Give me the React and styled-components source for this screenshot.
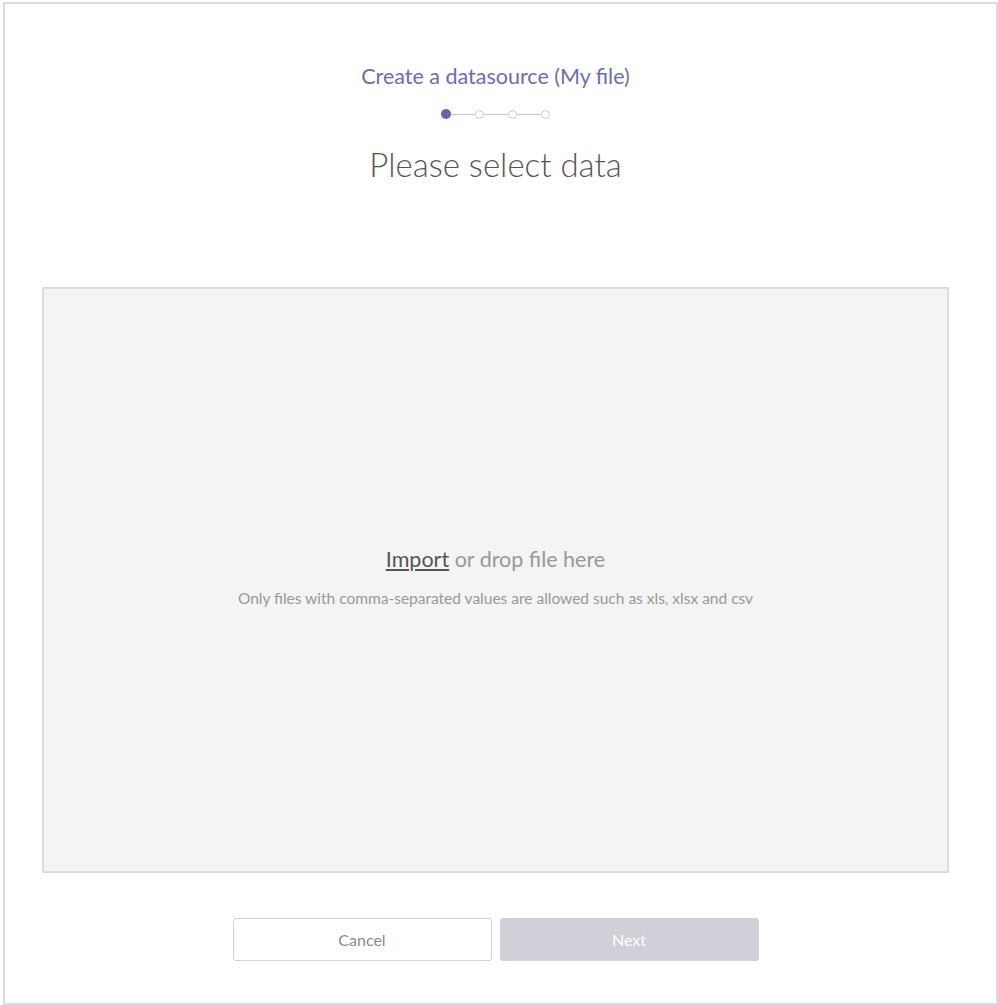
import React from 'react';
import styled, { createGlobalStyle } from 'styled-components';

const GlobalStyle = createGlobalStyle`
  body {
    margin: 0;
    font-family: Lato, "Open Sans", sans-serif;
    background: #fff;
  }
`;

const Frame = styled.div`
  box-sizing: border-box;
  width: 995px;
  height: 1003px;
  margin: 2px 0 0 3px;
  border: 2px solid #dcdcdc;
  display: flex;
  flex-direction: column;
  align-items: center;
  padding: 58px 47px 0 37px;
`;

const Title = styled.h2`
  margin: 0;
  font-size: 21.5px;
  font-weight: 400;
  line-height: 28px;
  color: #6a6eb3;
`;

const Steps = styled.div`
  display: flex;
  align-items: center;
  margin-top: 17px;
  height: 14px;
`;

const Dot = styled.span`
  box-sizing: border-box;
  width: ${p => (p.$active ? 10 : 9)}px;
  height: ${p => (p.$active ? 10 : 9)}px;
  border-radius: 50%;
  background: ${p => (p.$active ? '#6266ae' : '#fff')};
  border: ${p => (p.$active ? 'none' : '1.5px solid #c7c7cd')};
`;

const Line = styled.span`
  width: 24px;
  height: 1px;
  background: #c7c7cd;
`;

const Heading = styled.h1`
  margin: 23px 0 0;
  font-size: 33px;
  font-weight: 300;
  line-height: 40px;
  color: #555;
`;

const DropZone = styled.div`
  box-sizing: border-box;
  align-self: stretch;
  margin-top: 103px;
  height: 586px;
  background: #f4f4f4;
  border: 2px solid #dcdce2;
  display: flex;
  flex-direction: column;
  align-items: center;
  justify-content: center;
  padding-bottom: 8px;
`;

const DropText = styled.div`
  font-size: 21.5px;
  color: #999;
  line-height: 28px;
`;

const ImportLink = styled.a`
  color: #555;
  text-decoration: underline;
  cursor: pointer;
`;

const Hint = styled.div`
  margin-top: 16px;
  font-size: 15.5px;
  color: #999;
`;

const Buttons = styled.div`
  display: flex;
  gap: 8px;
  margin-top: 45px;
`;

const Button = styled.button`
  box-sizing: border-box;
  width: 259px;
  height: 43px;
  border-radius: 3px;
  font-family: inherit;
  font-size: 16px;
  border: 1px solid #d0d0d8;
  background: ${p => (p.$primary ? '#d0d0d8' : '#fff')};
  color: ${p => (p.$primary ? '#fff' : '#8a8a95')};
  cursor: ${p => (p.$primary ? 'default' : 'pointer')};
`;

export default function App() {
  return (
    <>
      <GlobalStyle />
      <Frame>
        <Title>Create a datasource (My file)</Title>
        <Steps>
          <Dot $active />
          <Line />
          <Dot />
          <Line />
          <Dot />
          <Line />
          <Dot />
        </Steps>
        <Heading>Please select data</Heading>
        <DropZone>
          <DropText>
            <ImportLink>Import</ImportLink> or drop file here
          </DropText>
          <Hint>Only files with comma-separated values are allowed such as xls, xlsx and csv</Hint>
        </DropZone>
        <Buttons>
          <Button>Cancel</Button>
          <Button $primary disabled>Next</Button>
        </Buttons>
      </Frame>
    </>
  );
}
